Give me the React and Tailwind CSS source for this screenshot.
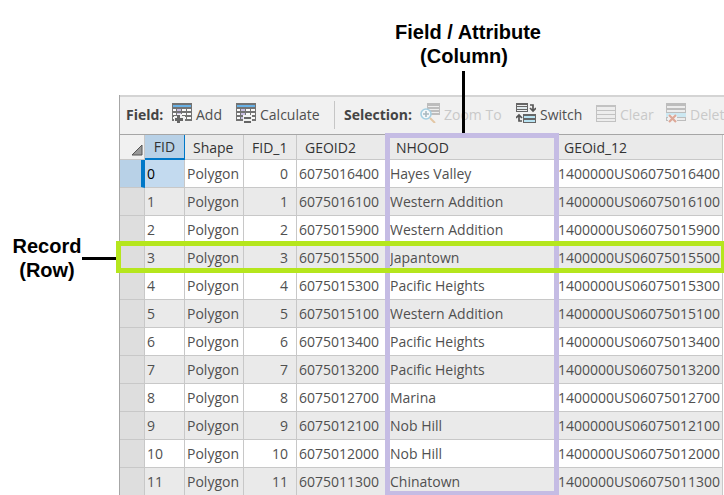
import React from 'react';

const records = [
  ['Hayes Valley', '016400'],
  ['Western Addition', '016100'],
  ['Western Addition', '015900'],
  ['Japantown', '015500'],
  ['Pacific Heights', '015300'],
  ['Western Addition', '015100'],
  ['Pacific Heights', '013400'],
  ['Pacific Heights', '013200'],
  ['Marina', '012700'],
  ['Nob Hill', '012100'],
  ['Nob Hill', '012000'],
  ['Chinatown', '011300'],
];

function Icon({ children }) {
  return (
    <svg width="20" height="20" viewBox="0 0 20 20" className="mb-1 shrink-0" aria-hidden="true">
      {children}
    </svg>
  );
}

function Grid() {
  return (
    <>
      <path d="M0 0h20v18H0z" fill="#737373" />
      <path d="M1 2h18v2H1z" fill="#68b1e6" />
      <path d="M1 6h3v2H1zM10 6h4v2h-4zM15 6h4v2h-4zM1 10h3v2H1zM10 10h4v2h-4zM15 10h4v2h-4zM1 14h3v2H1zM10 14h4v2h-4zM15 14h4v2h-4z" fill="#fafafa" />
      <path d="M5 6h4v2H5zM5 10h4v2H5zM5 14h4v2H5z" fill="#c9c0e2" />
    </>
  );
}

function AddIcon() {
  return (
    <Icon>
      <Grid />
      <path d="M2 13h3v-2h5v2h3v6H2z" fill="#f1f1f1" />
      <path d="M5 12h3v3h3v3H8v3H5v-3H3v-3h2z" fill="#666" />
    </Icon>
  );
}

function CalculateIcon() {
  return (
    <Icon>
      <Grid />
      <path d="M7 12h9v8H7z" fill="#f1f1f1" />
      <path d="M8 14h7v2H8zM8 18h7v2H8z" fill="#666" />
    </Icon>
  );
}

function ZoomIcon() {
  return (
    <Icon>
      <path d="M7 0h13v12H7z" fill="#bdbdbd" />
      <path d="M8 3h11v1H8zM8 6h11v1H8zM8 9h11v1H8z" fill="#eee" />
      <circle cx="6" cy="11" r="5" fill="#f5f8fa" stroke="#a5cfe2" strokeWidth="1.6" />
      <path d="M6 8v6M3 11h6" stroke="#a9b8c0" strokeWidth="1.6" />
      <path d="m10 15 5 5" stroke="#e3c7a4" strokeWidth="2" />
    </Icon>
  );
}

function SwitchIcon() {
  return (
    <Icon>
      <path d="M0 0h12v9H0z" fill="#666" />
      <path d="M1 2h10v1H1zM1 7h10v1H1z" fill="#eee" />
      <path d="M1 4h10v2H1z" fill="#dfe9ed" />
      <path d="M7 11h13v9H7z" fill="#666" />
      <path d="M8 13h11v2H8zM8 17h11v2H8z" fill="#b9e3f2" />
      <path d="M14 2h3v6M14 5l3 3 3-3M6 18H3v-6M0 15l3-3 3 3" fill="none" stroke="#555" strokeWidth="1.7" />
    </Icon>
  );
}

function ClearIcon() {
  return (
    <Icon>
      <path d="M0 2h20v17H0z" fill="#c2c2c2" />
      <path d="M1 4h18v3H1zM1 8h18v3H1zM1 12h18v3H1zM1 16h18v2H1z" fill="#ededed" />
    </Icon>
  );
}

function DeleteIcon() {
  return (
    <Icon>
      <path d="M0 0h20v18H0z" fill="#bdbdbd" />
      <path d="M1 3h18v2H1zM1 7h18v2H1zM1 15h18v2H1z" fill="#ededed" />
      <path d="M0 10h20v4H0z" fill="#cce8f2" />
      <path d="M2 12h9v8H2z" fill="#f1f1f1" />
      <path d="m3 12 7 7m0-7-7 7" stroke="#dda898" strokeWidth="2.2" />
    </Icon>
  );
}

function Tool({ icon, width, disabled, children }) {
  return (
    <button
      type="button"
      disabled={disabled}
      className={`flex shrink-0 items-center gap-1 text-[#4f4f4f] disabled:text-[#c9c9c9] ${width}`}
    >
      {icon}
      <span>{children}</span>
    </button>
  );
}

function Toolbar() {
  return (
    <div className="flex h-[38px] items-center overflow-hidden border-t-2 border-[#d4d4d4] bg-[#f1f1f1] pl-1.5 whitespace-nowrap">
      <span className="w-[46px] shrink-0 font-bold text-[#444]">Field:</span>
      <Tool icon={<AddIcon />} width="w-16">Add</Tool>
      <Tool icon={<CalculateIcon />} width="w-[98px]">Calculate</Tool>
      <span className="mr-[9px] h-7 w-px shrink-0 bg-[#c6c6c6]" />
      <span className="w-[76px] shrink-0 font-bold text-[#444]">Selection:</span>
      <Tool icon={<ZoomIcon />} width="w-24" disabled>Zoom To</Tool>
      <Tool icon={<SwitchIcon />} width="w-20">Switch</Tool>
      <Tool icon={<ClearIcon />} width="w-[70px]" disabled>Clear</Tool>
      <Tool icon={<DeleteIcon />} width="w-20" disabled>Delete</Tool>
    </div>
  );
}

const head = 'border-r border-b border-[#c8c8c8] pt-px pl-2 text-left font-normal';
const cell = 'border-r border-b border-[#c8c8c8] px-0.5';

function AttributeTable() {
  return (
    <table className="w-full table-fixed border-separate border-spacing-0 whitespace-nowrap">
      <colgroup>
        <col className="w-[25px]" />
        <col className="w-10" />
        <col className="w-[59px]" />
        <col className="w-[53px]" />
        <col className="w-[91px]" />
        <col className="w-[168px]" />
        <col />
      </colgroup>
      <thead>
        <tr className="h-[25px] bg-[#eaeaea] text-[#333]">
          <th className="border-r border-b border-[#c8c8c8] bg-[#f1f1f1] align-bottom" aria-label="Select all">
            <svg width="12" height="12" viewBox="0 0 12 12" className="mb-[3px] ml-[11px]" aria-hidden="true">
              <path d="M11 1v10H1z" fill="#999" stroke="#555" />
            </svg>
          </th>
          <th className="border-r border-b-2 border-[#0078c8] bg-[#b8d1e7] pt-px font-normal">FID</th>
          <th className={head}>Shape</th>
          <th className={head}>FID_1</th>
          <th className={head}>GEOID2</th>
          <th className={head}>NHOOD</th>
          <th className={head}>GEOid_12</th>
        </tr>
      </thead>
      <tbody>
        {records.map(([name, tract], i) => (
          <tr key={tract} className="h-7 bg-white text-[#505050] even:bg-[#eaeaea]">
            <td className={i === 0 ? 'border-r-4 border-b border-r-[#0078c8] border-b-[#c8c8c8] bg-[#b8d1e7]' : 'border-r border-b border-[#c8c8c8] bg-[#dedede]'} />
            <td className={i === 0 ? `${cell} bg-[#c3daef] text-black` : cell}>{i}</td>
            <td className={cell}>Polygon</td>
            <td className="border-r border-b border-[#c8c8c8] pr-2 text-right">{i}</td>
            <td className={cell}>{`6075${tract}`}</td>
            <td className={cell}>{name}</td>
            <td className={cell}>{`1400000US06075${tract}`}</td>
          </tr>
        ))}
      </tbody>
    </table>
  );
}

export default function App() {
  return (
    <div className="flex overflow-hidden bg-white font-['Open_Sans','Noto_Sans',sans-serif] text-sm leading-5">
      <div className="w-[119px] shrink-0 pt-[234px]">
        <div className="flex items-center">
          <p className="w-[82px] pl-3 text-center font-['Liberation_Sans',Arial,sans-serif] text-xl leading-6 font-bold text-black">
            Record (Row)
          </p>
          <span className="h-[3px] grow bg-black" />
        </div>
      </div>
      <div className="min-w-0 grow">
        <h1 className="ml-[265px] flex h-[95px] w-[168px] flex-col items-center pt-5 font-['Liberation_Sans',Arial,sans-serif] text-xl leading-6 font-bold whitespace-nowrap text-black">
          <span>Field / Attribute</span>
          <span className="pr-2">(Column)</span>
        </h1>
        <div className="relative border-l border-[#a6a6a6]">
          <Toolbar />
          <div className="bg-[#f1f1f1] pt-px">
            <div className="border-t border-[#a6a6a6] bg-white pr-px">
              <AttributeTable />
            </div>
          </div>
          <span className="absolute -top-6 left-[342px] h-[63px] w-[3px] bg-black" />
          <span className="absolute top-[38px] bottom-0 left-[265px] w-[174px] border-5 border-[#c5bce4]" />
          <span className="absolute top-[146px] right-0 -left-1 h-8 border-5 border-r-[3px] border-[#b5e61d]" />
        </div>
      </div>
    </div>
  );
}
